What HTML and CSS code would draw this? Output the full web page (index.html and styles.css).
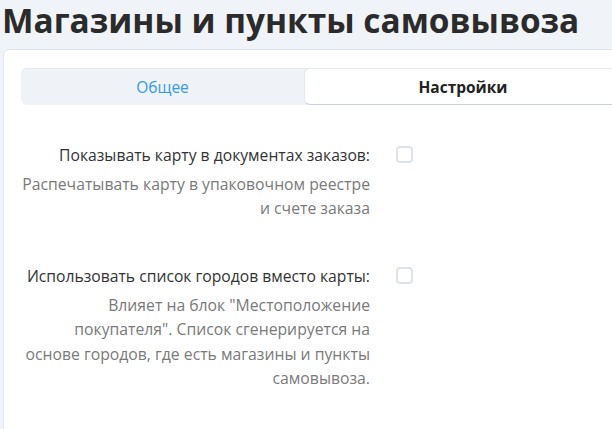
FILE: index.html
```html
<!DOCTYPE html>
<html lang="ru">
<head>
<meta charset="utf-8">
<link rel="stylesheet" href="styles.css">
</head>
<body>
<h1 class="title">Магазины и пункты самовывоза</h1>
<div class="card">
  <div class="tabs">
    <div class="tab tab-inactive">Общее</div>
    <div class="tab tab-active">Настройки</div>
  </div>
  <div class="form">
    <div class="row">
      <div class="label-col">
        <div class="label">Показывать карту в документах заказов:</div>
        <div class="desc">Распечатывать карту в упаковочном реестре и&nbsp;счете заказа</div>
      </div>
      <div class="control"><span class="checkbox"></span></div>
    </div>
    <div class="row">
      <div class="label-col">
        <div class="label">Использовать список городов вместо карты:</div>
        <div class="desc">Влияет на блок "Местоположение покупателя". Список сгенерируется на основе городов, где есть магазины и пункты самовывоза.</div>
      </div>
      <div class="control"><span class="checkbox"></span></div>
    </div>
  </div>
</div>
</body>
</html>
```
FILE: styles.css
```css
html, body {
  margin: 0;
  padding: 0;
}
body {
  background: #f0f3f8;
  font-family: "Open Sans", "Noto Sans", sans-serif;
  color: #333;
  width: 612px;
  height: 429px;
  overflow: hidden;
}
.title {
  margin: 0;
  padding: 0 0 0 2px;
  font-size: 33.4px;
  line-height: 40px;
  font-weight: 700;
  color: #2b2b2b;
  white-space: nowrap;
  height: 49px;
}
.card {
  margin-left: 3px;
  width: 700px;
  height: 420px;
  background: #fff;
  border: 1px solid #dfe5ef;
  border-radius: 6px;
  padding: 18px 0 0 17px;
  box-sizing: border-box;
}
.tabs {
  display: flex;
  background: #eff2f7;
  border-radius: 6px;
  height: 37px;
  box-shadow: inset 0 1px 0 #e3e8f0;
}
.tab {
  display: flex;
  align-items: center;
  justify-content: center;
  font-size: 15.5px;
}
.tab-inactive {
  width: 283px;
  color: #3399ee;
}
.tab-active {
  width: 370px;
  background: #fff;
  border-radius: 6px;
  border: 1px solid #e3e8f1;
  border-bottom-color: #c9d1e0;
  font-weight: 700;
  color: #222;
  padding-right: 52px;
  box-sizing: border-box;
}
.form {
  padding-top: 38px;
  display: flex;
  flex-direction: column;
  gap: 43px;
}
.row {
  display: flex;
  align-items: flex-start;
}
.label-col {
  width: 349px;
  text-align: right;
}
.label {
  font-size: 15.7px;
  line-height: 24px;
  color: #333;
}
.desc {
  margin-top: 5px;
  font-size: 15.75px;
  line-height: 24.4px;
  color: #7a7a7a;
}
.control {
  padding-left: 26px;
  padding-top: 3px;
}
.checkbox {
  display: block;
  width: 17px;
  height: 17px;
  box-sizing: border-box;
  border: 2px solid #dde3ee;
  border-radius: 4px;
  background: #fff;
}
```
